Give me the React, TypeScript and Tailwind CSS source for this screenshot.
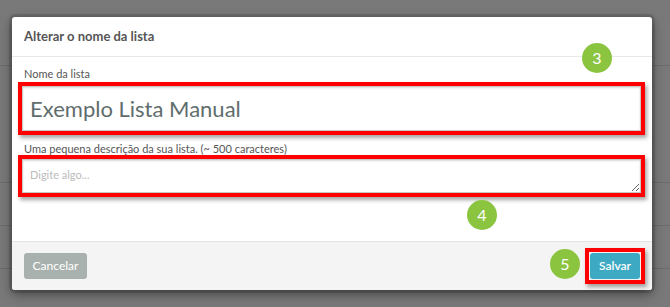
import React from "react";

const font = { fontFamily: "Lato, 'Noto Sans', sans-serif" };

function Step({ n, className }: { n: number; className: string }) {
  return (
    <div
      className={`absolute flex h-[30px] w-[30px] items-center justify-center rounded-full bg-[#8bc540] text-[16px] text-white ${className}`}
    >
      {n}
    </div>
  );
}

export default function App() {
  return (
    <div className="relative h-[307px] w-[670px] overflow-hidden bg-[#797979]" style={font}>
      {/* Page behind the overlay */}
      <div className="flex flex-col">
        <div className="h-[66px] border-b border-[#6c6c6c]" />
        <div className="h-[117px] border-b border-[#6c6c6c]" />
        <div className="h-[43px] border-b border-[#6c6c6c]" />
        <div className="h-[43px] border-b border-[#6c6c6c]" />
      </div>

      {/* Modal */}
      <div className="absolute left-[12px] top-[17px] flex h-[273px] w-[640px] flex-col rounded-[3px] bg-white shadow-[0_0_0_3px_rgba(0,0,0,0.12),0_4px_12px_rgba(0,0,0,0.45)]">
        <div className="flex h-[40px] items-center border-b border-[#e8e8e8] px-[12px]">
          <h4 className="text-[13px] font-bold text-[#555]">Alterar o nome da lista</h4>
        </div>

        <div className="flex flex-1 flex-col pl-[6px] pr-[7px] pt-[10px]">
          <label className="pl-[6px] text-[11px] leading-[14px] text-[#555]">Nome da lista</label>
          <div className="mt-px border-4 border-[#ff0000] shadow-[2px_3px_4px_rgba(0,0,0,0.35)]">
            <input
              readOnly
              value="Exemplo Lista Manual"
              className="block h-[45px] w-full border border-[#c8c8c8] bg-white px-[7px] text-[22px] text-[#5f6d6c] shadow-[inset_0_1px_2px_rgba(0,0,0,0.15)] outline-none"
              style={font}
            />
          </div>
          <label className="mt-[7px] pl-[6px] text-[11px] leading-[13px] text-[#555]">
            Uma pequena descrição da sua lista. (~ 500 caracteres)
          </label>
          <div className="border-4 border-[#ff0000] shadow-[2px_3px_4px_rgba(0,0,0,0.35)]">
            <textarea
              placeholder="Digite algo..."
              className="block h-[34px] w-full resize-y border border-[#c8c8c8] bg-white px-[7px] py-[7px] text-[11px] leading-[16px] text-[#555] shadow-[inset_0_1px_2px_rgba(0,0,0,0.15)] outline-none placeholder:text-[#bbb]"
              style={font}
            />
          </div>
        </div>

        <div className="flex h-[49px] items-center justify-between rounded-b-[3px] border-t border-[#e3e3e3] bg-[#f4f4f4] pl-[12px] pr-[7px]">
          <button className="h-[26px] w-[63px] rounded-[3px] bg-[#a9b1ae] text-[12px] text-white">
            Cancelar
          </button>
          <div className="border-4 border-[#ff0000] p-px shadow-[2px_3px_4px_rgba(0,0,0,0.35)]">
            <button className="block h-[26px] w-[50px] rounded-[3px] bg-[#3ea9c3] text-[12px] font-semibold text-white">
              Salvar
            </button>
          </div>
        </div>

        <Step n={3} className="left-[570px] top-[26px]" />
        <Step n={4} className="left-[455px] top-[183px]" />
        <Step n={5} className="left-[538px] top-[232px]" />
      </div>
    </div>
  );
}
